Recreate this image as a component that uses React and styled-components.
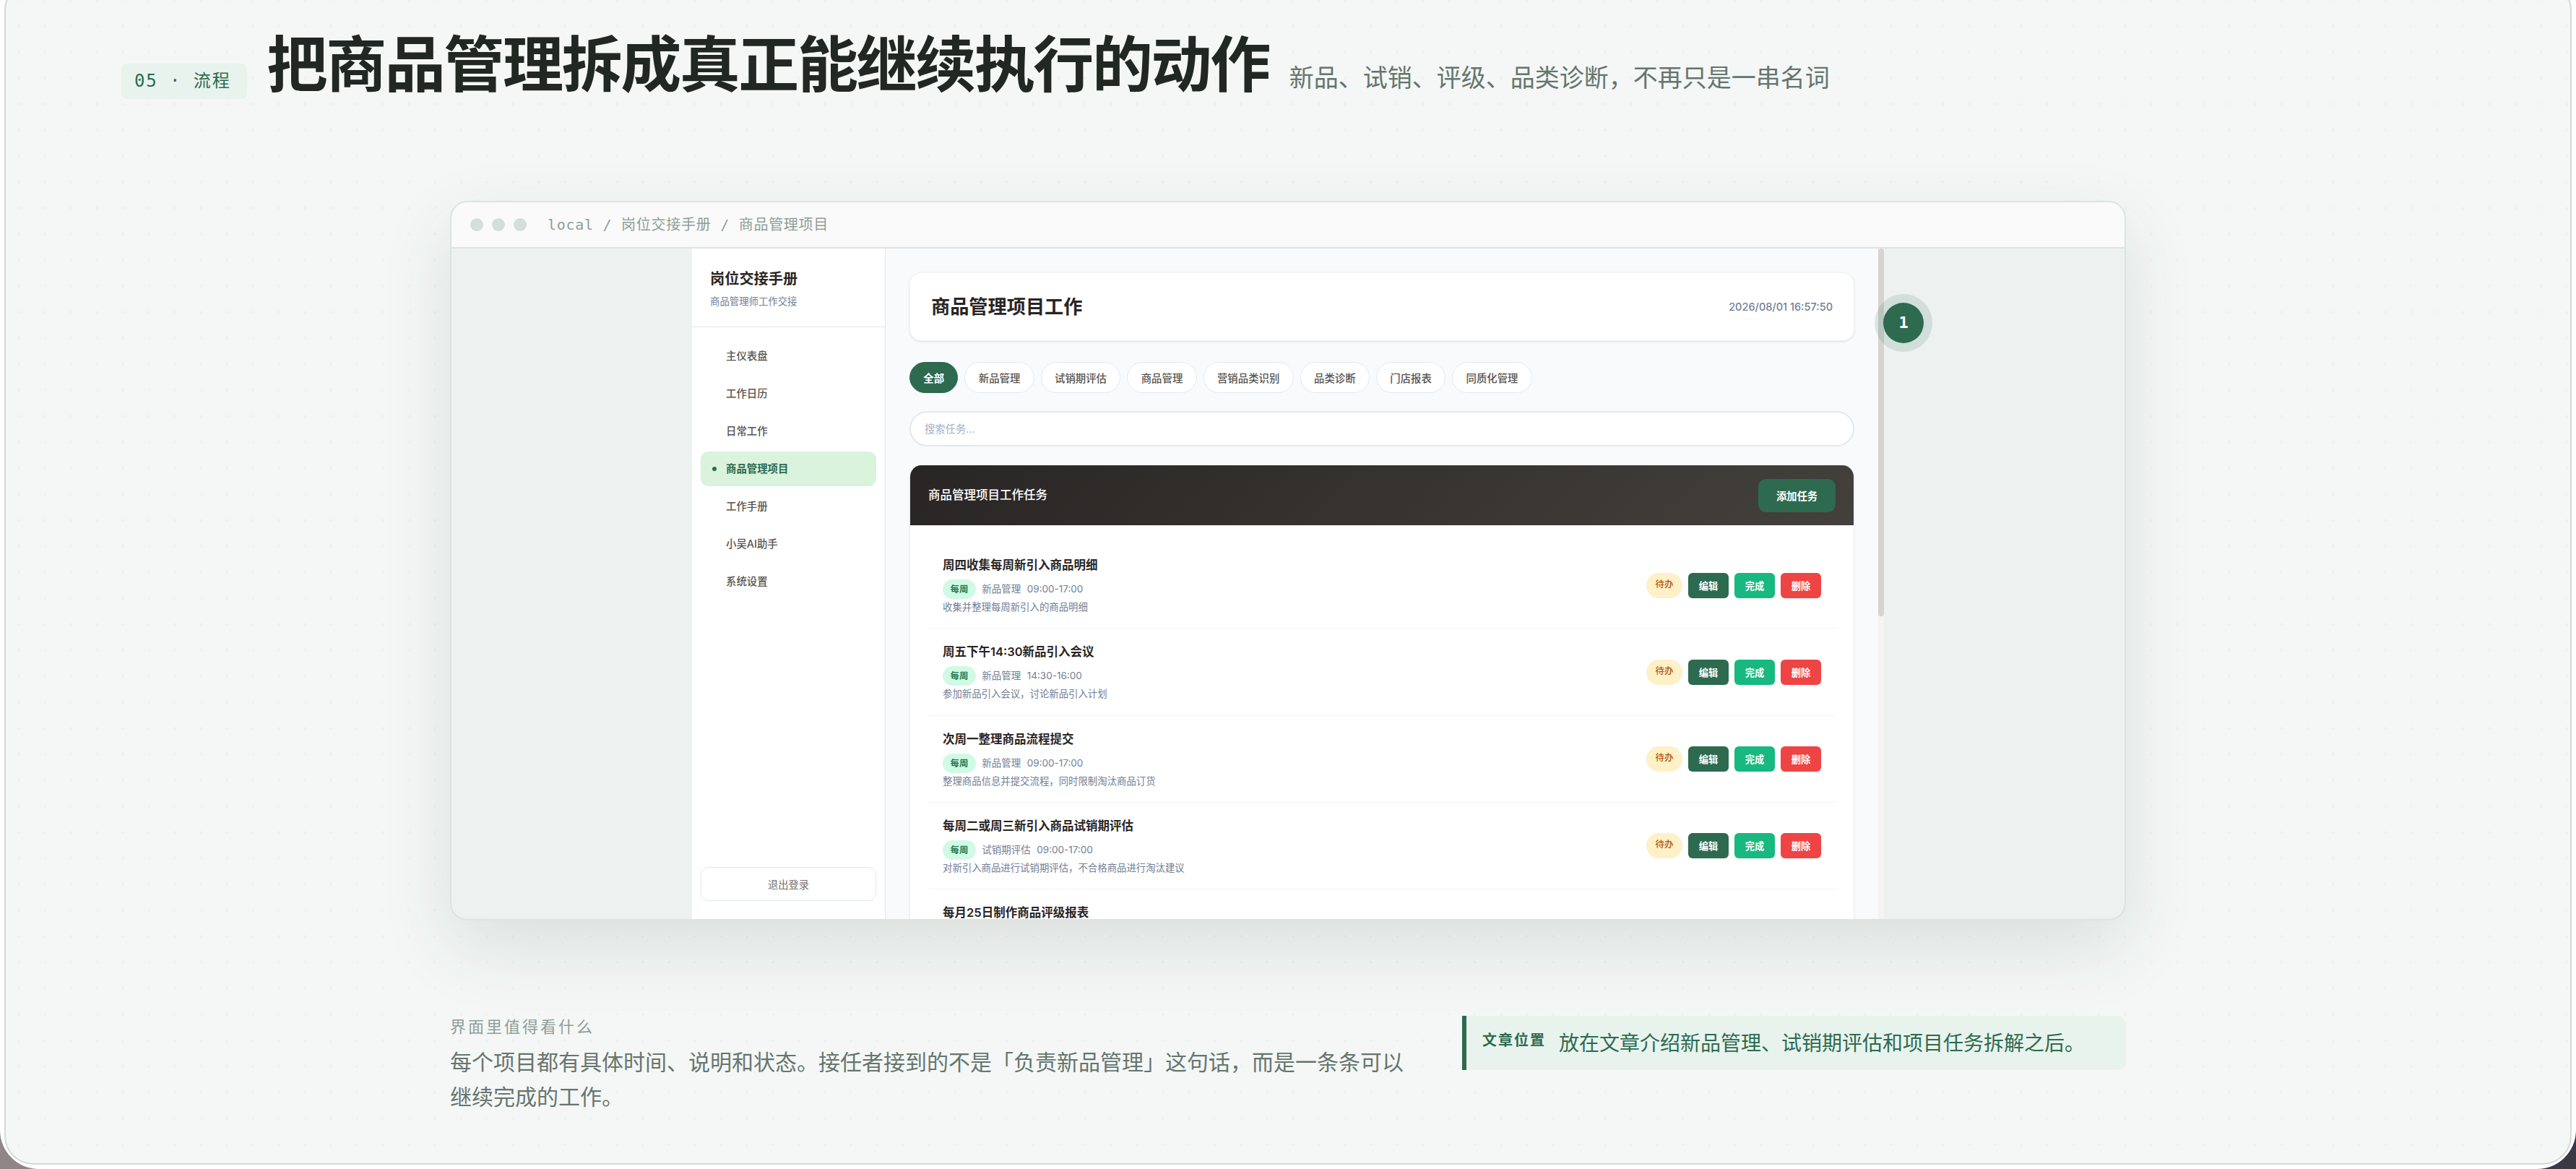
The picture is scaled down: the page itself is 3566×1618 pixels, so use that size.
import styled, { createGlobalStyle, css } from 'styled-components'

const NAV_ITEMS = [
  '主仪表盘',
  '工作日历',
  '日常工作',
  '商品管理项目',
  '工作手册',
  '小吴AI助手',
  '系统设置',
]

const FILTERS = [
  '全部',
  '新品管理',
  '试销期评估',
  '商品管理',
  '营销品类识别',
  '品类诊断',
  '门店报表',
  '同质化管理',
]

const TASKS = [
  {
    title: '周四收集每周新引入商品明细',
    cycle: '每周',
    category: '新品管理',
    time: '09:00-17:00',
    desc: '收集并整理每周新引入的商品明细',
  },
  {
    title: '周五下午14:30新品引入会议',
    cycle: '每周',
    category: '新品管理',
    time: '14:30-16:00',
    desc: '参加新品引入会议，讨论新品引入计划',
  },
  {
    title: '次周一整理商品流程提交',
    cycle: '每周',
    category: '新品管理',
    time: '09:00-17:00',
    desc: '整理商品信息并提交流程，同时限制淘汰商品订货',
  },
  {
    title: '每周二或周三新引入商品试销期评估',
    cycle: '每周',
    category: '试销期评估',
    time: '09:00-17:00',
    desc: '对新引入商品进行试销期评估，不合格商品进行淘汰建议',
  },
  { title: '每月25日制作商品评级报表' },
]

function Task({ task }) {
  return (
    <TaskRow>
      <TaskInfo>
        <TaskTitle>{task.title}</TaskTitle>
        {task.cycle && (
          <>
            <TaskMeta>
              <Cycle>{task.cycle}</Cycle>
              <span>{task.category}</span>
              <span>{task.time}</span>
            </TaskMeta>
            <TaskDesc>{task.desc}</TaskDesc>
          </>
        )}
      </TaskInfo>
      {task.cycle && (
        <TaskActions>
          <Status>待办</Status>
          <ActionButton $color="#2d6a4f">编辑</ActionButton>
          <ActionButton $color="#17b981">完成</ActionButton>
          <ActionButton $color="#ef4444">删除</ActionButton>
        </TaskActions>
      )}
    </TaskRow>
  )
}

function HandoverApp() {
  return (
    <AppFrame>
      <Sidebar>
        <SidebarHeader>
          <SidebarTitle>岗位交接手册</SidebarTitle>
          <SidebarSub>商品管理师工作交接</SidebarSub>
        </SidebarHeader>
        <Nav>
          {NAV_ITEMS.map(item => (
            <NavItem key={item} $active={item === '商品管理项目'}>
              {item}
            </NavItem>
          ))}
        </Nav>
        <Logout>退出登录</Logout>
      </Sidebar>

      <Main>
        <PageHeader>
          <PageTitle>商品管理项目工作</PageTitle>
          <Clock>2026/08/01 16:57:50</Clock>
        </PageHeader>

        <Filters>
          {FILTERS.map(name => (
            <Filter key={name} $active={name === '全部'}>
              {name}
            </Filter>
          ))}
        </Filters>

        <Search placeholder="搜索任务..." />

        <TaskCard>
          <TaskCardHeader>
            <TaskCardTitle>商品管理项目工作任务</TaskCardTitle>
            <AddButton>添加任务</AddButton>
          </TaskCardHeader>
          <TaskList>
            {TASKS.map(task => (
              <Task key={task.title} task={task} />
            ))}
          </TaskList>
        </TaskCard>
      </Main>

      <ScrollTrack>
        <ScrollThumb />
      </ScrollTrack>
      <Marker>1</Marker>
    </AppFrame>
  )
}

export default function App() {
  return (
    <>
      <GlobalStyle />
      <Page>
        <Slide>
          <Heading>
            <Tag>05 · 流程</Tag>
            <Title>把商品管理拆成真正能继续执行的动作</Title>
            <Subtitle>新品、试销、评级、品类诊断，不再只是一串名词</Subtitle>
          </Heading>

          <Window>
            <WindowBar>
              <Dots>
                <Dot />
                <Dot />
                <Dot />
              </Dots>
              <Path>local / 岗位交接手册 / 商品管理项目</Path>
            </WindowBar>
            <WindowBody>
              <HandoverApp />
            </WindowBody>
          </Window>

          <Footer>
            <Note>
              <NoteLabel>界面里值得看什么</NoteLabel>
              <NoteText>
                每个项目都有具体时间、说明和状态。接任者接到的不是「负责新品管理」这句话，而是一条条可以继续完成的工作。
              </NoteText>
            </Note>
            <Callout>
              <CalloutLabel>文章位置</CalloutLabel>
              <CalloutText>
                放在文章介绍新品管理、试销期评估和项目任务拆解之后。
              </CalloutText>
            </Callout>
          </Footer>
        </Slide>
      </Page>
    </>
  )
}

const sans = `Inter, 'Noto Sans CJK SC', sans-serif`
const mono = `'DejaVu Sans Mono', 'Noto Sans CJK SC', monospace`

const GlobalStyle = createGlobalStyle`
  * {
    box-sizing: border-box;
  }

  body {
    margin: 0;
    overflow: hidden;
    font-family: ${sans};
    background: linear-gradient(90deg, #8f8687 0%, #3a3943 100%);
  }

  h1,
  h2,
  h3,
  p {
    margin: 0;
  }

  button {
    border: none;
    padding: 0;
    font-family: inherit;
  }
`

const Page = styled.div`
  width: 3566px;
  height: 1618px;
  padding: 0 6px 6px;
  overflow: hidden;
  display: flex;
  background-color: #ffffff;
  border-radius: 0 0 54px 54px;
`

const Slide = styled.main`
  flex: 1;
  height: 1638px;
  margin-top: -26px;
  padding: 26px 160px 0;
  border: 2px solid #d6d8d7;
  border-radius: 40px;
  background-color: #f4f7f6;
  background-image: radial-gradient(
    circle at 18px 18px,
    #edf1ef 1.4px,
    transparent 2px
  );
  background-size: 36px 36px;
  background-position: 0 6px;
`

const Heading = styled.header`
  display: flex;
  align-items: baseline;
  height: 276px;
  padding-top: 32px;
`

const Tag = styled.span`
  padding: 0 22px 0 18px;
  line-height: 49px;
  font-family: ${mono};
  font-size: 24px;
  letter-spacing: 1.9px;
  color: #2d6a4f;
  background-color: #e8f3ed;
  border-radius: 8px;
`

const Title = styled.h1`
  margin-left: 28px;
  font-size: 84px;
  line-height: 112px;
  font-weight: 700;
  letter-spacing: -2.4px;
  color: #212723;
`

const Subtitle = styled.p`
  margin-left: 28px;
  font-size: 34px;
  line-height: 50px;
  color: #66756e;
`

const Window = styled.section`
  width: 2320px;
  height: 996px;
  margin: 0 auto;
  border: 2px solid #dbe4e0;
  border-radius: 24px;
  background-color: #edf1f0;
  box-shadow: 0 36px 100px rgba(44, 60, 38, 0.12);
  overflow: hidden;
`

const WindowBar = styled.div`
  display: flex;
  align-items: center;
  height: 64px;
  padding: 0 26px;
  border-bottom: 2px solid #dbe4e0;
  background-color: #fafafa;
`

const Dots = styled.div`
  display: flex;
  gap: 12px;
`

const Dot = styled.span`
  width: 18px;
  height: 18px;
  border-radius: 50%;
  background-color: #d4deda;
`

const Path = styled.span`
  margin-left: 29px;
  font-family: ${mono};
  font-size: 20px;
  line-height: 30px;
  letter-spacing: 0.72px;
  color: #8f9e97;
`

const WindowBody = styled.div`
  display: flex;
  justify-content: center;
  height: 928px;
`

const AppFrame = styled.div`
  position: relative;
  display: flex;
  width: 1650px;
  height: 928px;
  background-color: #f9fafc;
`

const Sidebar = styled.aside`
  display: flex;
  flex-direction: column;
  width: 268px;
  border-right: 1px solid #e2e8f0;
  background-color: #ffffff;
`

const SidebarHeader = styled.div`
  height: 109px;
  padding: 27px 25px 0;
  border-bottom: 1px solid #e2e8f0;
`

const SidebarTitle = styled.h2`
  font-size: 20.2px;
  line-height: 30px;
  font-weight: 600;
  color: #292524;
`

const SidebarSub = styled.p`
  margin-top: 6px;
  font-size: 13.4px;
  line-height: 20px;
  color: #718096;
`

const Nav = styled.nav`
  flex: 1;
  display: flex;
  flex-direction: column;
  gap: 4px;
  padding: 16px 12px;
`

const NavItem = styled.a`
  position: relative;
  height: 48px;
  padding-left: 35px;
  border-radius: 11px;
  font-size: 14.4px;
  line-height: 48px;
  font-weight: 500;
  color: #57534e;

  ${({ $active }) =>
    $active &&
    css`
      font-weight: 600;
      color: #2d6a4f;
      background-color: #d9f3dd;

      &::before {
        content: '';
        position: absolute;
        top: 21px;
        left: 16px;
        width: 6px;
        height: 6px;
        border-radius: 50%;
        background-color: #2d6a4f;
      }
    `}
`

const Logout = styled.button`
  height: 47px;
  margin: 0 12px 25px;
  border: 1px solid #e2e8f0;
  border-radius: 11px;
  background-color: #ffffff;
  font-size: 14.3px;
  color: #78716c;
`

const Main = styled.div`
  flex: 1;
  padding: 33px 33px 0;
  overflow: hidden;
`

const PageHeader = styled.div`
  display: flex;
  align-items: center;
  justify-content: space-between;
  height: 95px;
  padding: 0 29px;
  border: 1px solid #f0f3f7;
  border-radius: 16px;
  background-color: #ffffff;
  box-shadow: 0 1px 3px rgba(15, 23, 42, 0.12);
`

const PageTitle = styled.h2`
  font-size: 26.2px;
  line-height: 40px;
  font-weight: 600;
  color: #292524;
`

const Clock = styled.span`
  font-size: 14.5px;
  font-weight: 500;
  color: #718096;
`

const Filters = styled.div`
  display: flex;
  gap: 9.1px;
  margin-top: 29px;
`

const Filter = styled.button`
  height: 43px;
  padding: 0 18.3px;
  border: 1px solid ${({ $active }) => ($active ? '#2d6a4f' : '#e2e8f0')};
  border-radius: 22px;
  background-color: ${({ $active }) => ($active ? '#2d6a4f' : '#ffffff')};
  font-size: 14.4px;
  font-weight: ${({ $active }) => ($active ? 600 : 500)};
  color: ${({ $active }) => ($active ? '#ffffff' : '#57534e')};
`

const Search = styled.input`
  display: block;
  width: 100%;
  height: 49px;
  margin-top: 25px;
  padding: 0 19px;
  border: 2px solid #e2e8f0;
  border-radius: 25px;
  background-color: #ffffff;
  font-family: ${sans};
  font-size: 14.3px;

  &::placeholder {
    color: #a3b0c5;
  }
`

const TaskCard = styled.section`
  height: 700px;
  margin-top: 26px;
  border: 1px solid #edf0f4;
  border-top: none;
  border-radius: 16px;
  background-color: #ffffff;
  box-shadow: 0 1px 3px rgba(15, 23, 42, 0.08);
  overflow: hidden;
`

const TaskCardHeader = styled.div`
  display: flex;
  align-items: center;
  justify-content: space-between;
  height: 83px;
  padding: 0 25px;
  background: linear-gradient(135deg, #292524 0%, #44403c 100%);
  color: #ffffff;
`

const TaskCardTitle = styled.h3`
  padding-bottom: 3px;
  font-size: 16.5px;
  font-weight: 500;
`

const AddButton = styled.button`
  width: 107px;
  height: 46px;
  border-radius: 11px;
  background-color: #2d6a4f;
  font-size: 14.3px;
  font-weight: 600;
  color: #ffffff;
`

const TaskList = styled.div`
  padding: 23px 25px 0;
`

const TaskRow = styled.div`
  display: flex;
  justify-content: space-between;
  height: 120.3px;
  padding: 20px 20px 0;
  border-bottom: 1px solid #f1f5f9;
`

const TaskInfo = styled.div`
  display: flex;
  flex-direction: column;
`

const TaskTitle = styled.h3`
  font-size: 16.5px;
  line-height: 25px;
  font-weight: 600;
  color: #292524;
`

const TaskMeta = styled.div`
  display: flex;
  align-items: center;
  gap: 8.4px;
  margin-top: 7px;
  font-size: 13.5px;
  line-height: 27px;
  color: #718096;
`

const Cycle = styled.span`
  padding: 0 10.6px;
  border-radius: 14px;
  background-color: #d1fae5;
  font-size: 12.4px;
  font-weight: 600;
  color: #1b7a57;
`

const TaskDesc = styled.p`
  margin-top: 1px;
  font-size: 13.4px;
  line-height: 20px;
  color: #718096;
`

const TaskActions = styled.div`
  display: flex;
  gap: 8px;
  margin-top: 22.5px;
`

const Status = styled.span`
  width: 50px;
  height: 35px;
  border-radius: 18px;
  background-color: #fef0c7;
  font-size: 12.4px;
  line-height: 31px;
  font-weight: 500;
  text-align: center;
  color: #b45309;
`

const ActionButton = styled.button`
  width: 56px;
  height: 35px;
  border-radius: 6px;
  background-color: ${({ $color }) => $color};
  font-size: 13.3px;
  font-weight: 600;
  color: #ffffff;
`

const ScrollTrack = styled.div`
  width: 8px;
  background-color: #f4f4f3;
`

const ScrollThumb = styled.div`
  height: 509px;
  border-radius: 4px;
  background-color: #d6d3d1;
`

const Marker = styled.span`
  position: absolute;
  top: 75px;
  right: -55px;
  width: 56px;
  height: 56px;
  border-radius: 50%;
  background-color: #2d6a4f;
  box-shadow: 0 0 0 12px rgba(45, 106, 79, 0.14);
  font-family: ${mono};
  font-size: 22px;
  line-height: 56px;
  font-weight: 700;
  text-align: center;
  color: #ffffff;
`

const Footer = styled.footer`
  display: flex;
  align-items: flex-start;
  justify-content: space-between;
  width: 2320px;
  margin: 132px auto 0;
`

const Note = styled.div`
  width: 1345px;
`

const NoteLabel = styled.p`
  font-size: 22px;
  line-height: 30px;
  letter-spacing: 3px;
  color: #8f9e97;
`

const NoteText = styled.p`
  margin-top: 10px;
  font-size: 30px;
  line-height: 48px;
  color: #66756e;
`

const Callout = styled.aside`
  display: flex;
  align-items: flex-start;
  width: 919px;
  height: 75px;
  padding: 16px 22px;
  border-left: 6px solid #2d6a4f;
  border-radius: 0 12px 12px 0;
  background-color: #e8f3ed;
  color: #2d6a4f;
`

const CalloutLabel = styled.span`
  font-size: 20px;
  line-height: 36px;
  font-weight: 600;
  letter-spacing: 2px;
`

const CalloutText = styled.p`
  margin-left: 18px;
  font-size: 28px;
  line-height: 44px;
`
